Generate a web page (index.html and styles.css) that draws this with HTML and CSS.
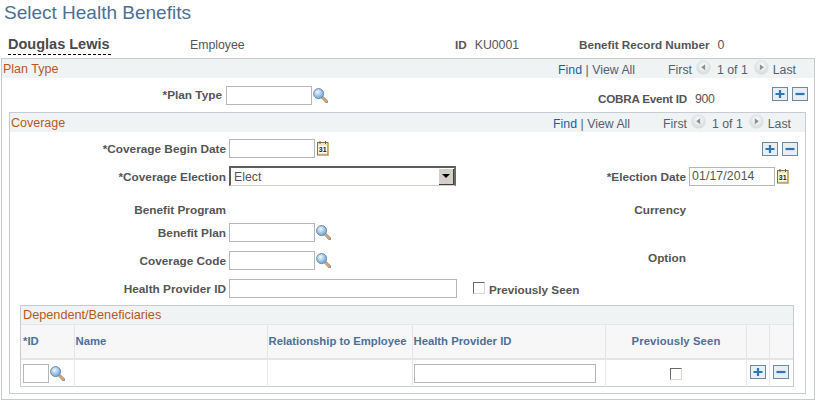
FILE: index.html
```html
<!DOCTYPE html>
<html lang="en">
<head>
<meta charset="utf-8">
<title>Select Health Benefits</title>
<link rel="stylesheet" href="styles.css">
</head>
<body>
<svg class="defs" width="0" height="0" aria-hidden="true">
  <defs>
    <radialGradient id="lens" cx="40%" cy="35%" r="70%">
      <stop offset="0" stop-color="#eef7fd"/>
      <stop offset="1" stop-color="#5f9fd4"/>
    </radialGradient>
    <radialGradient id="nav" cx="50%" cy="40%" r="60%">
      <stop offset="0" stop-color="#ffffff"/>
      <stop offset="1" stop-color="#d2d6d8"/>
    </radialGradient>
    <symbol id="i-search" viewBox="0 0 15 15" preserveAspectRatio="none">
      <path d="M9.5 9.5 13.6 13.6" stroke="#8a8a8a" stroke-width="3" stroke-linecap="round"/>
      <path d="M9.8 9.8 13.3 13.3" stroke="#e3a470" stroke-width="1.7" stroke-linecap="round"/>
      <circle cx="5.6" cy="5.6" r="5" fill="url(#lens)" stroke="#6d8ba3"/>
    </symbol>
    <symbol id="i-cal" viewBox="0 0 12 15" preserveAspectRatio="none">
      <rect x="0.5" y="1.5" width="10.5" height="12.5" fill="#f4e6b4" stroke="#8c7440"/>
      <path d="M11.6 3v11.6H2" fill="none" stroke="#c9b678"/>
      <path d="M3 0v3M8.5 0v3" stroke="#6b5a30"/>
      <rect x="1.5" y="4.5" width="8.5" height="7.5" fill="#fffdf2"/>
      <text x="1.8" y="11" class="cal-num">31</text>
    </symbol>
    <symbol id="i-add" viewBox="0 0 16 14" preserveAspectRatio="none">
      <rect x="0.5" y="0.5" width="15" height="13" fill="#e8eff3" stroke="#6b8ca0"/>
      <path d="M3.5 7h9M8 3v8" stroke="#2f74b5" stroke-width="2.2"/>
    </symbol>
    <symbol id="i-del" viewBox="0 0 16 14" preserveAspectRatio="none">
      <rect x="0.5" y="0.5" width="15" height="13" fill="#e8eff3" stroke="#6b8ca0"/>
      <path d="M3.5 7h9" stroke="#2f74b5" stroke-width="2.2"/>
    </symbol>
    <symbol id="i-prev" viewBox="0 0 16 16">
      <circle cx="8" cy="8" r="7.5" fill="url(#nav)" stroke="#e4e7e9"/>
      <path d="M9.8 4.5v6.5L5.5 7.7z" fill="#8b8f92"/>
    </symbol>
    <symbol id="i-next" viewBox="0 0 16 16">
      <circle cx="8" cy="8" r="7.5" fill="url(#nav)" stroke="#e4e7e9"/>
      <path d="M6.2 4.5v6.5l4.3-3.3z" fill="#8b8f92"/>
    </symbol>
  </defs>
</svg>

<h1 class="title">Select Health Benefits</h1>

<div class="person">
  <span class="person-name">Douglas Lewis</span>
  <span class="person-role">Employee</span>
  <span class="person-id"><b>ID</b><span class="val">KU0001</span></span>
  <span class="person-rec"><b>Benefit Record Number</b><span class="val">0</span></span>
</div>

<section class="box box-outer">
  <header class="box-head">
    <span class="box-title">Plan Type</span>
    <span class="nav">
      <a class="link">Find</a><span class="sep">|</span><span>View All</span>
      <span class="nav-first">First</span>
      <svg class="nav-btn nav-btn-prev"><use href="#i-prev"/></svg>
      <span>1 of 1</span>
      <svg class="nav-btn nav-btn-next"><use href="#i-next"/></svg>
      <span>Last</span>
    </span>
  </header>
  <div class="plan-row">
    <label class="lab plan-lab">*Plan Type</label>
    <span class="input w-field"></span>
    <svg class="ico-search"><use href="#i-search"/></svg>
    <span class="cobra"><b>COBRA Event ID</b><span class="val">900</span></span>
    <span class="adds adds-plan"><svg class="ico-btn"><use href="#i-add"/></svg><svg class="ico-btn"><use href="#i-del"/></svg></span>
  </div>

  <section class="box box-inner">
    <header class="box-head">
      <span class="box-title">Coverage</span>
      <span class="nav">
        <a class="link">Find</a><span class="sep">|</span><span>View All</span>
        <span class="nav-first">First</span>
        <svg class="nav-btn nav-btn-prev"><use href="#i-prev"/></svg>
        <span>1 of 1</span>
        <svg class="nav-btn nav-btn-next"><use href="#i-next"/></svg>
        <span>Last</span>
      </span>
    </header>

    <div class="cov-grid">
      <label class="lab r1 c1">*Coverage Begin Date</label>
      <span class="field r1 c2"><span class="input w-field"></span><svg class="ico-cal"><use href="#i-cal"/></svg></span>
      <span class="adds adds-cov r1 c4"><svg class="ico-btn"><use href="#i-add"/></svg><svg class="ico-btn"><use href="#i-del"/></svg></span>

      <label class="lab r2 c1">*Coverage Election</label>
      <span class="field r2 c2"><span class="select"><span class="select-val">Elect</span><span class="select-btn"><i></i></span></span></span>
      <label class="lab r2 c3">*Election Date</label>
      <span class="field r2 c4"><span class="input w-field input-val">01/17/2014</span><svg class="ico-cal"><use href="#i-cal"/></svg></span>

      <label class="lab lab-prog r3 c1">Benefit Program</label>
      <label class="lab lab-prog r3 c3">Currency</label>

      <label class="lab r4 c1">Benefit Plan</label>
      <span class="field r4 c2"><span class="input w-field"></span><svg class="ico-search"><use href="#i-search"/></svg></span>

      <label class="lab r5 c1">Coverage Code</label>
      <span class="field r5 c2"><span class="input w-field"></span><svg class="ico-search"><use href="#i-search"/></svg></span>
      <label class="lab lab-option r5 c3">Option</label>

      <label class="lab r6 c1">Health Provider ID</label>
      <span class="field r6 c2"><span class="input w-wide"></span><span class="check check-gap"></span><b class="check-lab">Previously Seen</b></span>
    </div>

    <section class="box box-table">
      <header class="table-title">Dependent/Beneficiaries</header>
      <table class="grid">
        <colgroup>
          <col class="col-id"><col class="col-name"><col class="col-rel"><col class="col-hp"><col class="col-seen"><col class="col-a"><col class="col-b">
        </colgroup>
        <thead>
          <tr>
            <th class="th-id">*ID</th><th>Name</th><th>Relationship to Employee</th><th>Health Provider ID</th><th class="center">Previously Seen</th><th></th><th></th>
          </tr>
        </thead>
        <tbody>
          <tr>
            <td class="td-id"><span class="id-cell"><span class="input w-id"></span><svg class="ico-search"><use href="#i-search"/></svg></span></td>
            <td></td>
            <td></td>
            <td class="td-hp"><span class="input w-hp"></span></td>
            <td class="center"><span class="check check-cell"></span></td>
            <td class="center"><svg class="ico-btn"><use href="#i-add"/></svg></td>
            <td class="center"><svg class="ico-btn"><use href="#i-del"/></svg></td>
          </tr>
        </tbody>
      </table>
    </section>
  </section>
</section>
</body>
</html>
```

FILE: styles.css
```css
* { box-sizing: border-box; }
html, body { margin: 0; padding: 0; background: #fff; }
body {
  width: 819px;
  height: 407px;
  overflow: hidden;
  font-family: "Liberation Sans", Arial, sans-serif;
  font-size: 12.3px;
  color: #555;
  position: relative;
}
.defs { position: absolute; }
.cal-num { font: bold 7px "Liberation Sans", Arial, sans-serif; fill: #222; }
b { font-weight: bold; font-size: 11.7px; }
.title {
  margin: 0;
  padding: 1px 0 0 4px;
  height: 36px;
  font-size: 19px;
  line-height: 24px;
  font-weight: normal;
  color: #4d6f94;
}
.person {
  display: flex;
  align-items: flex-start;
  height: 22px;
  padding-left: 8px;
  line-height: 16px;
}
.person-name {
  flex: none;
  width: 103px;
  font-size: 14.5px;
  font-weight: bold;
  color: #4a4a4a;
  border-bottom: 1px dashed #000;
  height: 19px;
  white-space: nowrap;
}
.person-role { margin-left: 79px; width: 265px; padding-top: 1px; }
.person-id { width: 124px; padding-top: 1px; }
.person-rec { padding-top: 1px; }
.val { margin-left: 8px; font-weight: normal; }
.box { border: 1px solid #c6ccd2; }
.box-outer {
  margin-left: 1px;
  width: 814px;
  height: 342px;
}
.box-head {
  display: flex;
  justify-content: space-between;
  align-items: center;
  height: 19px;
  background: #f0f3f4;
  padding-left: 1px;
}
.box-outer > .box-head { padding-right: 18px; }
.box-inner > .box-head { padding-right: 14px; }
.box-title { font-size: 12.5px; color: #b5591b; }
.nav { display: flex; align-items: center; height: 19px; padding-top: 3px; color: #555f6b; }
.link { color: #1a5fa3; }
.sep { margin: 0 3.5px; }
.nav-first { margin-left: 33px; }
.nav-btn { width: 15px; height: 15px; margin-top: -6px; }
.nav-btn-prev { margin-left: 4px; margin-right: 6px; }
.nav-btn-next { margin-left: 6px; margin-right: 4px; }
.plan-row {
  display: flex;
  align-items: center;
  height: 34px;
}
.lab {
  font-weight: bold;
  font-size: 11.8px;
  line-height: 19px;
  white-space: nowrap;
  color: #555;
  margin-bottom: -1px;
}
.plan-lab { width: 220px; margin-right: 4px; margin-bottom: 0; text-align: right; }
.input {
  display: inline-block;
  height: 19px;
  line-height: 17px;
  border: 1px solid #b4b8ba;
  background: #fff;
  padding-left: 2px;
  flex: none;
}
.input-val { letter-spacing: 0.1px; }
.w-field { width: 86px; }
.w-wide { width: 228px; }
.w-id { width: 26px; }
.w-hp { width: 182px; display: block; }
.ico-search { width: 15px; height: 15px; margin-left: 1px; flex: none; }
.ico-cal { width: 12px; height: 15px; margin-left: 2px; flex: none; }
.ico-btn { width: 16px; height: 14px; display: block; flex: none; }
.cobra { margin-left: 270px; padding-top: 8px; letter-spacing: -0.25px; }
.adds { display: flex; gap: 4px; }
.adds-plan { margin-left: auto; margin-right: 6px; align-self: flex-start; margin-top: 9px; }
.box-inner {
  margin-left: 7px;
  width: 797px;
  height: 282px;
}
.cov-grid {
  display: grid;
  grid-template-columns: 216px 354px 109px 1fr;
  grid-template-rows: 19px 28px 36px 20px 28px 28px;
  padding-top: 7px;
  align-items: end;
}
.c1 { grid-column: 1; justify-self: end; }
.c2 { grid-column: 2; margin-left: 3px; }
.c3 { grid-column: 3; justify-self: end; margin-right: 3px; }
.c4 { grid-column: 4; }
.r1 { grid-row: 1; }
.r2 { grid-row: 2; }
.r3 { grid-row: 3; }
.r4 { grid-row: 4; }
.r5 { grid-row: 5; }
.r6 { grid-row: 6; }
.lab-prog { margin-bottom: 2px; }
.lab-option { margin-bottom: 2px; }
.adds-cov { justify-self: end; margin-right: 7px; align-self: center; }
.field { display: flex; align-items: center; white-space: nowrap; }
.select {
  display: flex;
  flex: none;
  width: 227px;
  height: 20px;
  border: 2px solid #5d5d5d;
  border-bottom: 1px solid #d4d0c8;
  border-right-color: #6a6a6a;
  background: #fff;
  align-items: center;
}
.select-val { flex: 1; padding-left: 3px; line-height: 16px; }
.select-btn {
  width: 15px;
  height: 16px;
  background: #d4d0c8;
  border-right: 1px solid #404040;
  border-bottom: 1px solid #404040;
  display: flex;
  align-items: center;
  justify-content: center;
}
.select-btn i {
  width: 0;
  height: 0;
  border-left: 4px solid transparent;
  border-right: 4px solid transparent;
  border-top: 4px solid #000;
}
.check {
  display: inline-block;
  width: 12px;
  height: 12px;
  border: 1px solid;
  border-color: #6b6b6b #dcd8d0 #dcd8d0 #6b6b6b;
  background: #fff;
  flex: none;
}
.check-gap { margin-left: 16px; margin-top: -1px; }
.check-lab { margin-left: 4px; margin-top: 1px; font-size: 11.7px; }
.box-table {
  margin: 7px 0 0 10px;
  width: 774px;
  height: 82px;
}
.table-title {
  height: 18px;
  line-height: 18px;
  padding-left: 2px;
  background: #f0f3f4;
  font-size: 12.7px;
  color: #b5591b;
}
.grid {
  width: 772px;
  table-layout: fixed;
  border-collapse: collapse;
  font-size: 11.3px;
}
.col-id { width: 53px; }
.col-name { width: 193px; }
.col-rel { width: 145px; }
.col-hp { width: 193px; }
.col-seen { width: 141px; }
.col-a { width: 23px; }
.col-b { width: 24px; }
.grid th {
  height: 34px;
  background: #f7f7f7;
  border-right: 1px solid #e5e5e5;
  border-top: 1px solid #e5e5e5;
  border-bottom: 2px solid #e5e5e5;
  text-align: left;
  color: #4e6f9a;
  padding: 0 0 0 1px;
  font-weight: bold;
}
.grid th.th-id { padding-left: 2px; }
.grid th.center { text-align: center; letter-spacing: 0.1px; }
.grid td {
  height: 28px;
  padding: 0;
  border-right: 1px solid #e8e8e8;
  vertical-align: middle;
}
.grid th:last-child, .grid td:last-child { border-right: 0; }
.grid td.center { text-align: center; }
.grid td .ico-btn { margin: -3px auto 0; }
.grid td.td-id { padding-left: 2px; }
.id-cell { display: flex; align-items: center; }
.grid td.td-hp { padding-left: 1px; }
.check-cell { vertical-align: middle; }
```
